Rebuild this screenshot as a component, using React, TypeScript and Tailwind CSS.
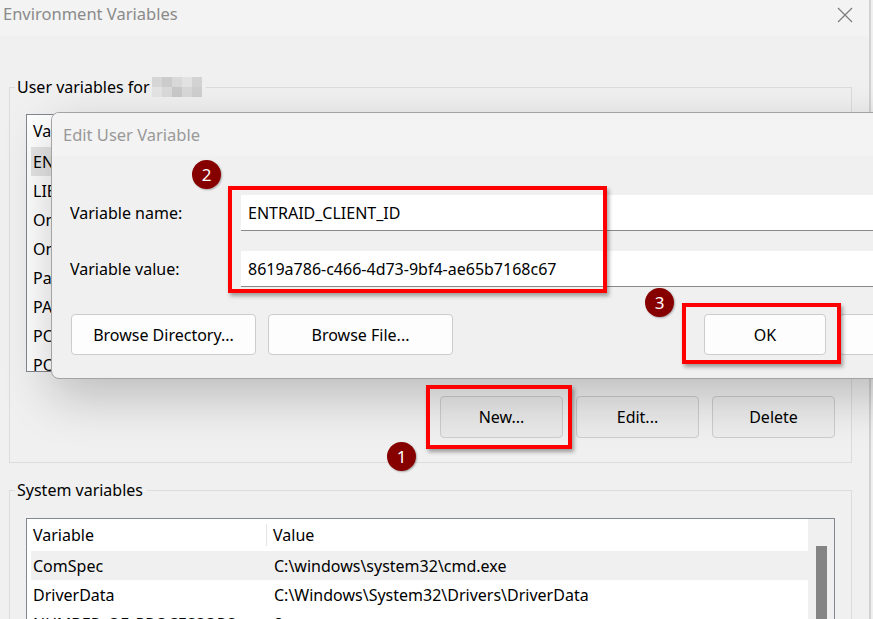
const userVars = [
  "ENTRAID_TENANT_ID",
  "LIB",
  "OneDrive",
  "OneDriveConsumer",
  "Path",
  "PATHEXT",
  "POSH_THEMES_PATH",
  "POWERSHELL_DISTRIBUTION",
];

const systemVars = [
  { name: "ComSpec", value: "C:\\windows\\system32\\cmd.exe", selected: true },
  { name: "DriverData", value: "C:\\Windows\\System32\\Drivers\\DriverData" },
  { name: "NUMBER_OF_PROCESSORS", value: "8" },
  { name: "OS", value: "Windows_NT" },
];

const mosaic = [
  "#d6d6d6", "#cccccc", "#d9d9d9", "#e2e2e2", "#d3d3d3",
  "#e4e4e4", "#dadada", "#c9c9c9", "#d8d8d8", "#cfcfcf",
];

function WinButton({ label, className = "" }: { label: string; className?: string }) {
  return (
    <button
      className={`flex items-center justify-center rounded-[4px] border border-[#cccccc] ${className}`}
    >
      {label}
    </button>
  );
}

function Badge({ n, className }: { n: number; className: string }) {
  return (
    <div
      className={`absolute flex h-[29px] w-[29px] items-center justify-center rounded-full bg-[#870000] text-[17px] text-white shadow-[1px_1px_2px_rgba(0,0,0,0.3)] ${className}`}
    >
      {n}
    </div>
  );
}

export default function App() {
  return (
    <div className="relative h-[619px] w-[873px] overflow-hidden bg-[#f0f0f0] font-['Noto_Sans',sans-serif] text-[16px] leading-[22px] text-black">
      {/* Environment Variables window */}
      <div className="flex h-full w-[871px] flex-col border-r-2 border-[#d2d2d2]">
        <div className="flex h-[36px] shrink-0 items-start justify-between bg-[#f3f3f3] pl-[3px] pr-[16px] pt-[3px]">
          <span className="text-[16.5px] text-[#8a8a8a]">Environment Variables</span>
          <svg width="16" height="16" viewBox="0 0 16 16" className="mt-[4px]">
            <path d="M1 1 L15 15 M15 1 L1 15" stroke="#7a7a7a" strokeWidth="1.2" />
          </svg>
        </div>

        <div className="flex flex-col pl-[9px] pr-[17px] pt-[40px]">
          <fieldset className="m-0 border border-[#dcdcdc] px-[5px] pb-[24px]">
            <legend className="flex items-center pl-[2px] pr-[4px]">
              User variables for
              <span className="ml-[2px] grid grid-cols-5">
                {mosaic.map((c, i) => (
                  <span key={i} className="h-[10px] w-[10px]" style={{ background: c }} />
                ))}
              </span>
            </legend>
            <div className="flex flex-col px-[11px] pt-[16px]">
              <div className="h-[258px] overflow-hidden border border-[#828790] bg-white px-[4px]">
                <div className="flex h-[32px] items-center">
                  <div className="w-[236px] border-r border-[#e5e5e5] pl-[2px]">Variable</div>
                  <div className="pl-[6px]">Value</div>
                </div>
                {userVars.map((v, i) => (
                  <div
                    key={v}
                    className={`flex h-[29px] items-center pl-[2px] ${i === 0 ? "bg-[#e5e5e5]" : ""}`}
                  >
                    {v}
                  </div>
                ))}
              </div>
              <div className="mt-[24px] flex justify-end gap-[13px]">
                <WinButton label="New..." className="h-[42px] w-[123px] bg-[#e9e9e9]" />
                <WinButton label="Edit..." className="h-[42px] w-[123px] bg-[#ebebeb]" />
                <WinButton label="Delete" className="h-[42px] w-[123px] bg-[#ececec]" />
              </div>
            </div>
          </fieldset>

          <fieldset className="m-0 mt-[16px] border border-[#dcdcdc] px-[5px] pb-[24px]">
            <legend className="pl-[2px] pr-[4px]">System variables</legend>
            <div className="flex flex-col px-[11px] pt-[17px]">
              <div className="flex h-[140px] overflow-hidden border border-[#828790] bg-white">
                <div className="flex-1 pl-[4px]">
                  <div className="flex h-[32px] items-center">
                    <div className="w-[236px] border-r border-[#e5e5e5] pl-[2px]">Variable</div>
                    <div className="pl-[6px]">Value</div>
                  </div>
                  {systemVars.map((v) => (
                    <div
                      key={v.name}
                      className={`grid h-[29px] grid-cols-[241px_1fr] items-center pl-[2px] ${v.selected ? "bg-[#f0f0f0]" : ""}`}
                    >
                      <span className="truncate">{v.name}</span>
                      <span>{v.value}</span>
                    </div>
                  ))}
                </div>
                <div className="flex w-[26px] justify-center bg-[#f0f0f0] pt-[27px]">
                  <div className="w-[11px] bg-[#858585]" />
                </div>
              </div>
            </div>
          </fieldset>
        </div>
      </div>

      {/* Edit User Variable dialog */}
      <div className="absolute left-[51px] top-[112px] flex h-[267px] w-[930px] flex-col overflow-hidden rounded-[8px] border border-[#a3a3a3] bg-[#f0f0f0] shadow-[0_18px_50px_rgba(0,0,0,0.22)]">
        <div className="flex h-[43px] items-center bg-[#f3f3f3] pl-[11px] text-[16.5px] text-[#999999]">
          Edit User Variable
        </div>
        <div className="flex flex-col gap-[20px] px-[18px] pt-[39px]">
          <div className="flex items-center">
            <div className="w-[171px]">Variable name:</div>
            <div className="flex h-[36px] flex-1 items-center border-b border-[#8a8a8a] bg-white pl-[7px]">
              ENTRAID_CLIENT_ID
            </div>
          </div>
          <div className="flex items-center">
            <div className="w-[171px]">Variable value:</div>
            <div className="flex h-[36px] flex-1 items-center border-b border-[#8a8a8a] bg-white pl-[7px]">
              8619a786-c466-4d73-9bf4-ae65b7168c67
            </div>
          </div>
        </div>
        <div className="mt-[27px] flex gap-[12px] px-[19px]">
          <WinButton label="Browse Directory..." className="h-[41px] w-[185px] bg-[#fdfdfd]" />
          <WinButton label="Browse File..." className="h-[41px] w-[185px] bg-[#fdfdfd]" />
          <WinButton label="OK" className="ml-auto h-[41px] w-[122px] bg-[#fdfdfd]" />
          <WinButton label="Cancel" className="ml-[1px] h-[41px] w-[122px] bg-[#fdfdfd]" />
        </div>
      </div>

      {/* annotations */}
      <div className="absolute left-[228px] top-[186px] h-[107px] w-[379px] border-[4px] border-[#ff0000] shadow-[2px_3px_4px_rgba(0,0,0,0.35)]" />
      <div className="absolute left-[682px] top-[303px] h-[61px] w-[159px] border-[4px] border-[#ff0000] shadow-[2px_3px_4px_rgba(0,0,0,0.35)]" />
      <div className="absolute left-[426px] top-[385px] h-[64px] w-[146px] border-[4px] border-[#ff0000] shadow-[2px_3px_4px_rgba(0,0,0,0.35)]" />
      <Badge n={2} className="left-[192px] top-[160px]" />
      <Badge n={3} className="left-[645px] top-[288px]" />
      <Badge n={1} className="left-[387px] top-[442px]" />
    </div>
  );
}
